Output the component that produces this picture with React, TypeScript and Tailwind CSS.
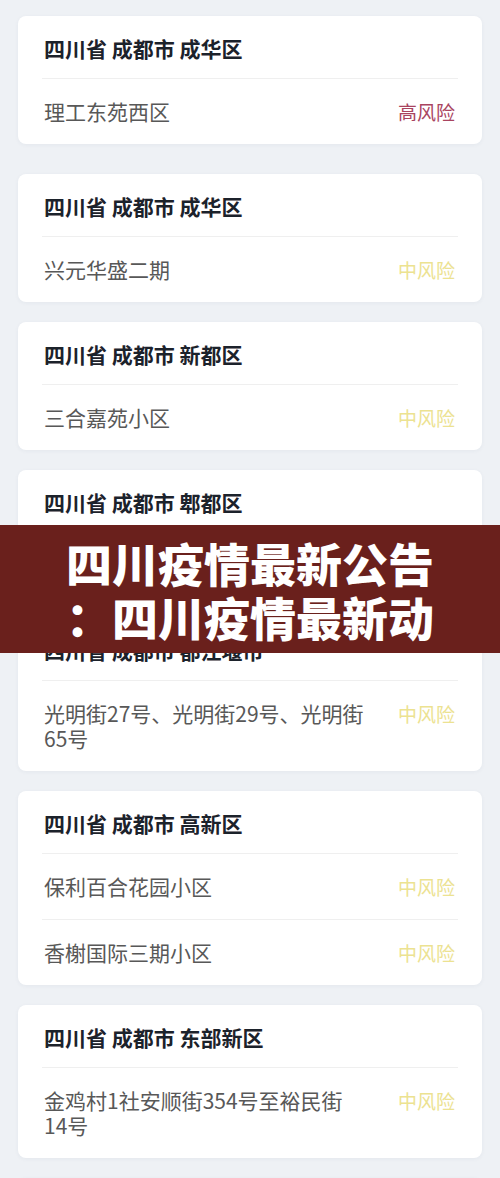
import React from "react";

type Row = { name: string; tail?: string; risk: "high" | "mid" };
type Card = { title: string; rows: Row[] };

const cards: Card[] = [
  { title: "四川省 成都市 成华区", rows: [{ name: "理工东苑西区", risk: "high" }] },
  { title: "四川省 成都市 成华区", rows: [{ name: "兴元华盛二期", risk: "mid" }] },
  { title: "四川省 成都市 新都区", rows: [{ name: "三合嘉苑小区", risk: "mid" }] },
  { title: "四川省 成都市 郫都区", rows: [{ name: "犀浦镇恒大曹家巷小区", risk: "mid" }] },
  {
    title: "四川省 成都市 都江堰市",
    rows: [{ name: "光明街27号、光明街29号、光明街", tail: "65号", risk: "mid" }],
  },
  {
    title: "四川省 成都市 高新区",
    rows: [
      { name: "保利百合花园小区", risk: "mid" },
      { name: "香榭国际三期小区", risk: "mid" },
    ],
  },
  {
    title: "四川省 成都市 东部新区",
    rows: [{ name: "金鸡村1社安顺街354号至裕民街", tail: "14号", risk: "mid" }],
  },
  { title: "四川省 成都市 龙泉驿区", rows: [{ name: "十陵街道小区", risk: "mid" }] },
];

export default function App() {
  return (
    <div
      className="relative w-[500px] h-[1178px] overflow-hidden bg-[#eef1f5]"
      style={{ fontFamily: '"Noto Sans CJK SC", "Noto Sans", sans-serif' }}
    >
      <div className="flex flex-col pt-4">
        {cards.map((c, i) => (
          <div
            key={i}
            className={`mx-[18px] rounded-lg bg-white shadow-[0_1px_4px_rgba(40,60,90,0.05)] px-6 ${
              i === 0 ? "mb-[30px]" : "mb-5"
            }`}
          >
            <div className="pt-[18px] pb-4 pl-[2px] text-[21px] leading-[28px] font-bold text-[#1c222b]">
              {c.title}
            </div>
            {c.rows.map((r, j) => (
              <div
                key={j}
                className="border-t border-[#efefef] flex items-start gap-5 py-5 pl-[2px] pr-[3px]"
              >
                <div className="flex-1 text-[21px] leading-[25px] text-[#585858]">
                  {r.name}
                  {r.tail ? <span className="whitespace-nowrap">{r.tail}</span> : null}
                </div>
                <div
                  className={`shrink-0 text-[19px] leading-[25px] ${
                    r.risk === "high" ? "text-[#a9445f]" : "text-[#ece291]"
                  }`}
                >
                  {r.risk === "high" ? "高风险" : "中风险"}
                </div>
              </div>
            ))}
          </div>
        ))}
      </div>

      <div className="absolute left-0 right-0 top-[525px] h-[128px] bg-[#6a201c] flex flex-col items-center justify-center overflow-hidden">
        <div className="text-white font-black text-[46px] leading-[54px] whitespace-nowrap">
          <div>四川疫情最新公告</div>
          <div>：四川疫情最新动</div>
        </div>
      </div>
    </div>
  );
}
